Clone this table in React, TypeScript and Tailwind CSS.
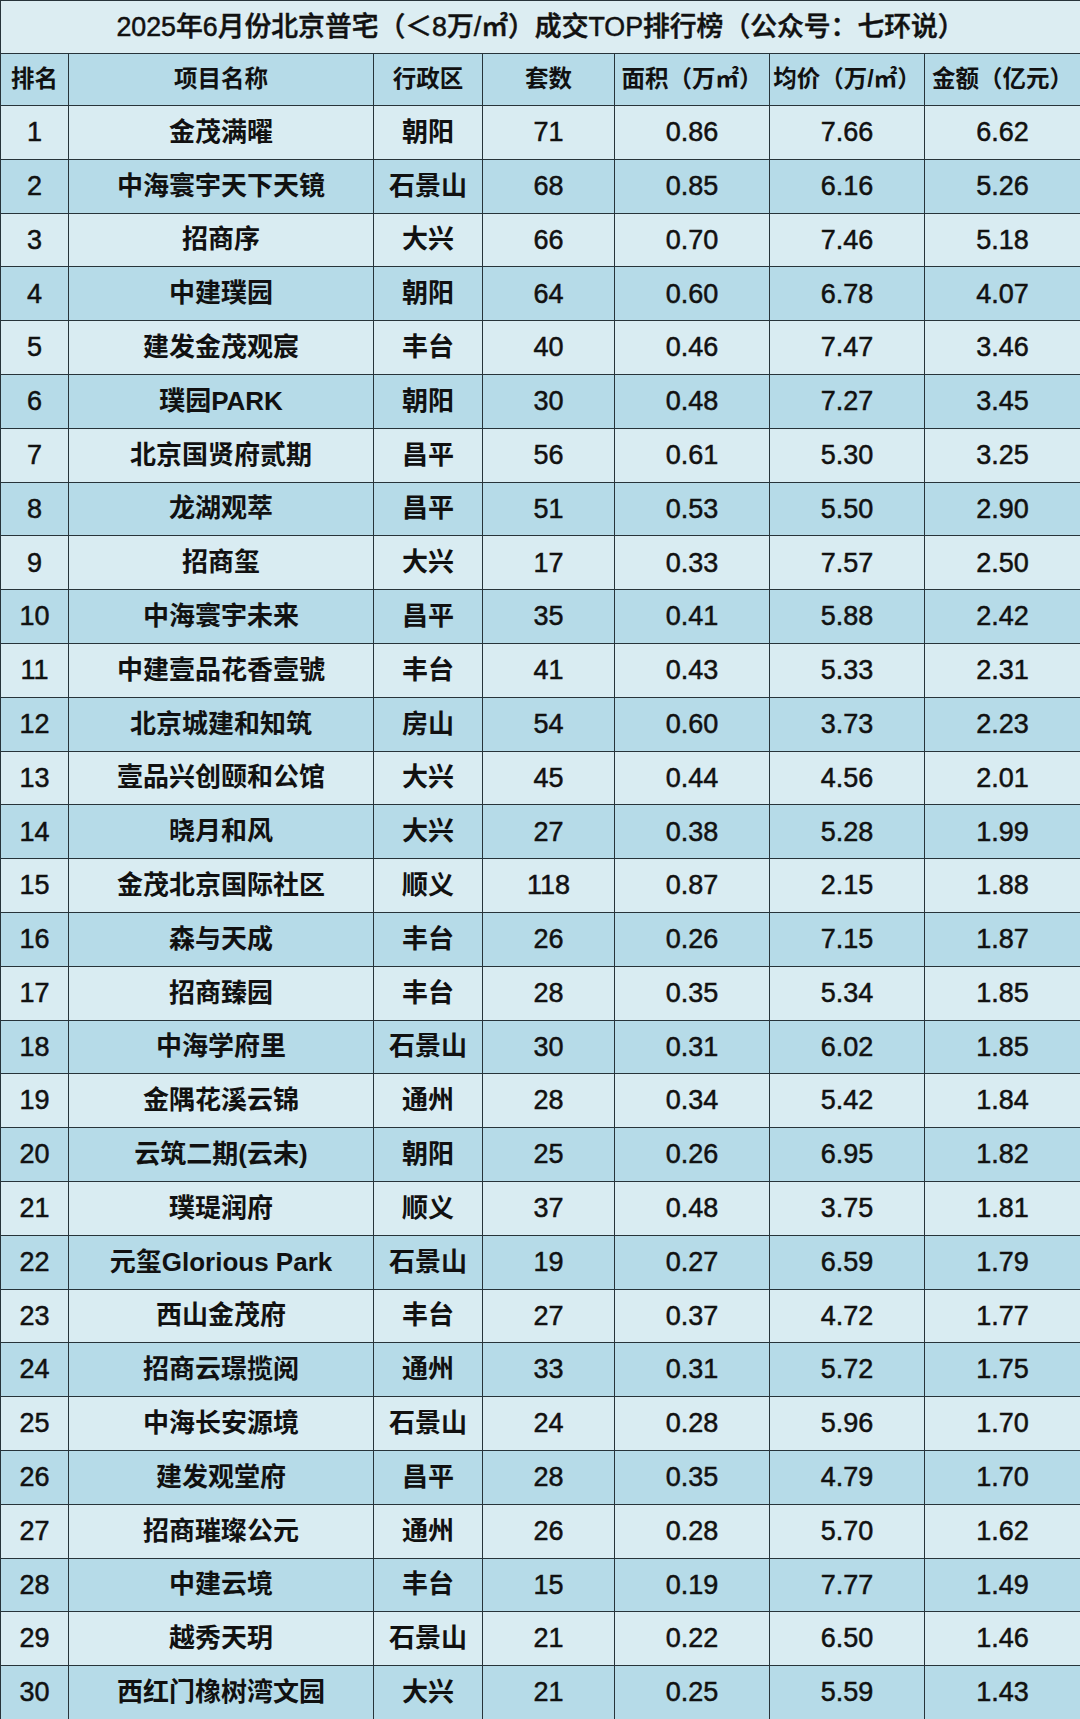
const rows: [string, string, number, string, string, string][] = [
  ['金茂满曜', '朝阳', 71, '0.86', '7.66', '6.62'],
  ['中海寰宇天下天镜', '石景山', 68, '0.85', '6.16', '5.26'],
  ['招商序', '大兴', 66, '0.70', '7.46', '5.18'],
  ['中建璞园', '朝阳', 64, '0.60', '6.78', '4.07'],
  ['建发金茂观宸', '丰台', 40, '0.46', '7.47', '3.46'],
  ['璞园PARK', '朝阳', 30, '0.48', '7.27', '3.45'],
  ['北京国贤府贰期', '昌平', 56, '0.61', '5.30', '3.25'],
  ['龙湖观萃', '昌平', 51, '0.53', '5.50', '2.90'],
  ['招商玺', '大兴', 17, '0.33', '7.57', '2.50'],
  ['中海寰宇未来', '昌平', 35, '0.41', '5.88', '2.42'],
  ['中建壹品花香壹號', '丰台', 41, '0.43', '5.33', '2.31'],
  ['北京城建和知筑', '房山', 54, '0.60', '3.73', '2.23'],
  ['壹品兴创颐和公馆', '大兴', 45, '0.44', '4.56', '2.01'],
  ['晓月和风', '大兴', 27, '0.38', '5.28', '1.99'],
  ['金茂北京国际社区', '顺义', 118, '0.87', '2.15', '1.88'],
  ['森与天成', '丰台', 26, '0.26', '7.15', '1.87'],
  ['招商臻园', '丰台', 28, '0.35', '5.34', '1.85'],
  ['中海学府里', '石景山', 30, '0.31', '6.02', '1.85'],
  ['金隅花溪云锦', '通州', 28, '0.34', '5.42', '1.84'],
  ['云筑二期(云未)', '朝阳', 25, '0.26', '6.95', '1.82'],
  ['璞瑅润府', '顺义', 37, '0.48', '3.75', '1.81'],
  ['元玺Glorious Park', '石景山', 19, '0.27', '6.59', '1.79'],
  ['西山金茂府', '丰台', 27, '0.37', '4.72', '1.77'],
  ['招商云璟揽阅', '通州', 33, '0.31', '5.72', '1.75'],
  ['中海长安源境', '石景山', 24, '0.28', '5.96', '1.70'],
  ['建发观堂府', '昌平', 28, '0.35', '4.79', '1.70'],
  ['招商璀璨公元', '通州', 26, '0.28', '5.70', '1.62'],
  ['中建云境', '丰台', 15, '0.19', '7.77', '1.49'],
  ['越秀天玥', '石景山', 21, '0.22', '6.50', '1.46'],
  ['西红门橡树湾文园', '大兴', 21, '0.25', '5.59', '1.43'],
];

const headers = ['排名', '项目名称', '行政区', '套数', '面积（万㎡）', '均价（万/㎡）', '金额（亿元）'];
const widths = ['w-[68px]', 'w-[305px]', 'w-[109px]', 'w-[132px]', 'w-[155px]', 'w-[155px]', 'w-[156px]'];

// numbers in the picture are a touch heavier than Liberation regular
const num = 'border border-[#27343a] text-center text-[27px] [-webkit-text-stroke:0.5px_#111]';
const cjk = 'border border-[#27343a] text-center text-[26px] font-semibold whitespace-nowrap';

export default function App() {
  return (
    <div
      className="w-[1080px] h-[1719px] bg-[#d9ecf2] text-[#111] overflow-hidden"
      style={{ fontFamily: '"Liberation Sans", "Noto Sans CJK SC", sans-serif' }}
    >
      <table className="w-[1080px] table-fixed border-collapse">
        <colgroup>
          {widths.map((w, i) => (
            <col key={i} className={w} />
          ))}
        </colgroup>
        <thead>
          <tr className="h-[53px] bg-[#dcedf2]">
            <th colSpan={7} className="border border-[#27343a] text-[26.8px] font-medium text-center [-webkit-text-stroke:0.5px_#111]">
              2025年6月份北京普宅（＜8万/㎡）成交TOP排行榜（公众号：七环说）
            </th>
          </tr>
          <tr className="h-[52px] bg-[#b6dbe8]">
            {headers.map((h, i) => (
              <th key={i} className="border border-[#27343a] text-[23.5px] font-semibold text-center whitespace-nowrap p-0">
                {h}
              </th>
            ))}
          </tr>
        </thead>
        <tbody>
          {rows.map((r, i) => (
            <tr key={i} className={`h-[53.8px] ${i % 2 === 0 ? 'bg-[#d9ecf2]' : 'bg-[#b6dbe8]'}`}>
              <td className={num}>{i + 1}</td>
              <td className={cjk}>{r[0]}</td>
              <td className={cjk}>{r[1]}</td>
              <td className={num}>{r[2]}</td>
              <td className={num}>{r[3]}</td>
              <td className={num}>{r[4]}</td>
              <td className={num}>{r[5]}</td>
            </tr>
          ))}
        </tbody>
      </table>
    </div>
  );
}
